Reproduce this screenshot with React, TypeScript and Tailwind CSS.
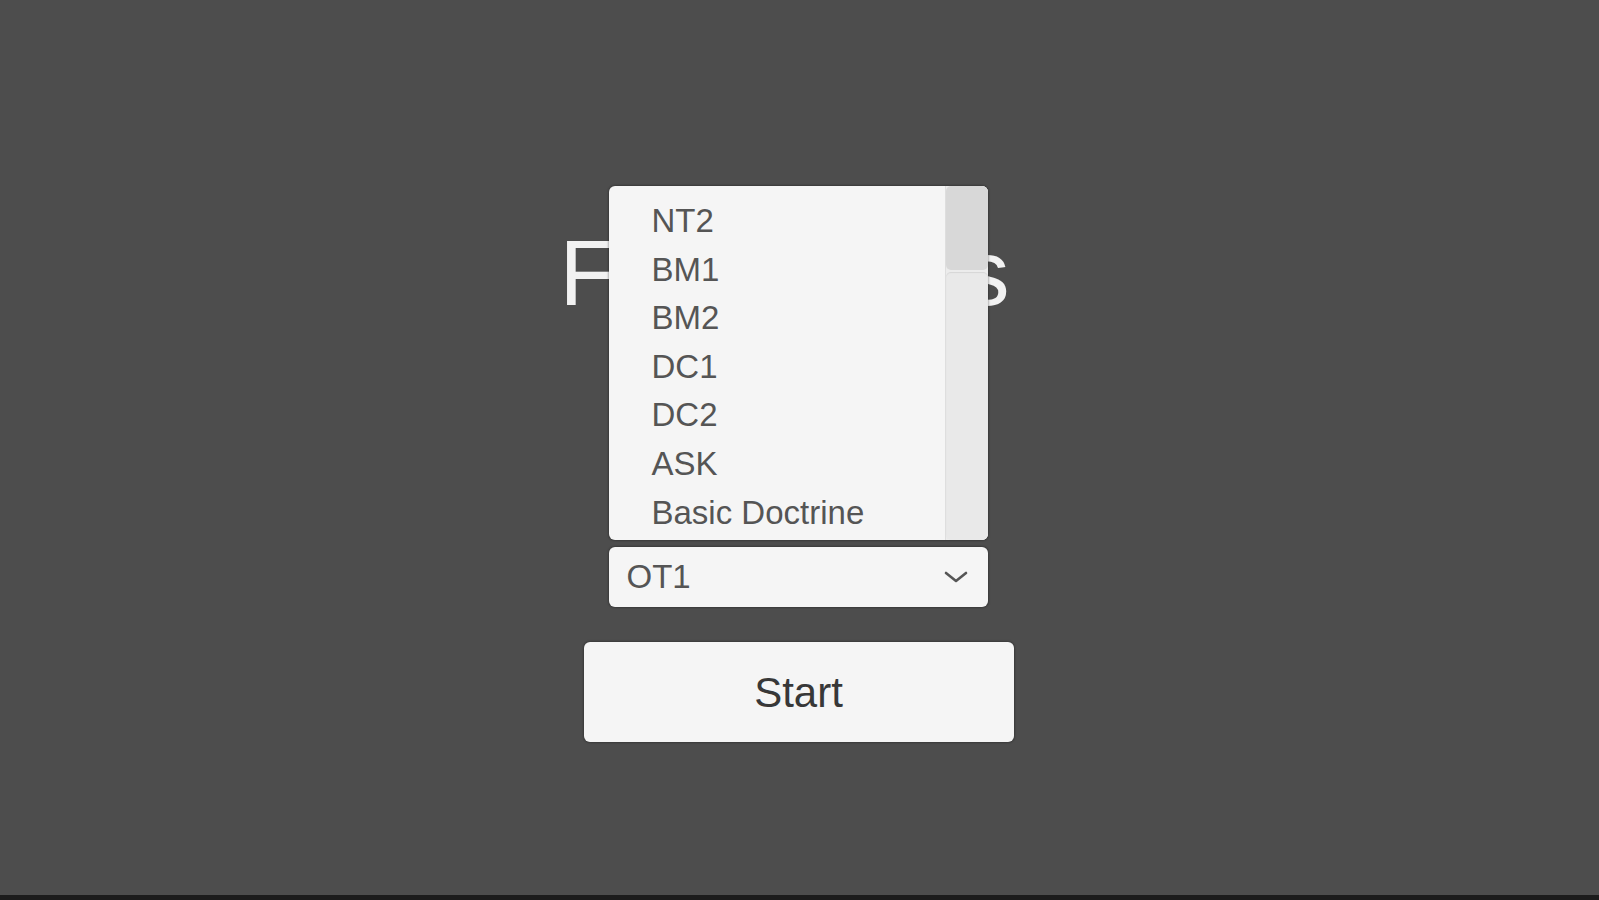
import React from 'react';

const options = ['NT2', 'BM1', 'BM2', 'DC1', 'DC2', 'ASK', 'Basic Doctrine'];

function Chevron({ className }: { className?: string }) {
  return (
    <svg viewBox="0 0 26 14" fill="none" stroke="currentColor" strokeWidth={2.6} strokeLinecap="round" strokeLinejoin="round" className={className}>
      <polyline points="3,3 13,11 23,3" />
    </svg>
  );
}

export default function App() {
  return (
    <div className="flex h-[900px] w-full flex-col bg-[#4d4d4d] font-['Liberation_Sans',Arial,sans-serif]">
      <main className="flex flex-1 flex-col items-center pt-[227px]">
        {/* Titel */}
        <h1 className="mr-[30px] text-[92px] leading-[92px] text-[#f2f2f2]">Flashcards</h1>

        {/* Dropdown */}
        <div className="relative mr-[3px] mt-[228px] w-[379px]">
          <div className="absolute bottom-[67px] left-0 flex h-[354px] w-[379px] overflow-hidden rounded-[6px] bg-[#f5f5f5] shadow-[0_0_2px_1px_rgba(0,0,0,0.25)]">
            <ul className="flex-1 pt-[11px]">
              {options.map((o) => (
                <li key={o} className="pl-[43px] text-[33px] leading-[48.6px] text-[#555]">
                  {o}
                </li>
              ))}
            </ul>
            <div className="flex w-[43px] flex-col gap-[2px] border-l border-[#dedede] bg-[#ececec]">
              <div className="h-[84px] rounded-[5px] bg-[#d8d8d8]" />
              <div className="flex-1 rounded-[5px] bg-[#e9e9e9] shadow-[inset_0_1px_1px_rgba(0,0,0,0.08)]" />
            </div>
          </div>

          <button
            type="button"
            className="flex h-[60px] w-[379px] items-center justify-between rounded-[6px] bg-[#f5f5f5] pl-[18px] pr-[19px] shadow-[0_0_2px_1px_rgba(0,0,0,0.25)]"
          >
            <span className="text-[33px] text-[#555]">OT1</span>
            <Chevron className="h-[14px] w-[26px] text-[#555]" />
          </button>
        </div>

        <button
          type="button"
          className="mr-[2px] mt-[35px] flex h-[100px] w-[430px] items-center justify-center rounded-[6px] bg-[#f5f5f5] text-[42px] text-[#383838] shadow-[0_0_2px_1px_rgba(0,0,0,0.25)]"
        >
          Start
        </button>
      </main>
      <div className="h-[5px] bg-[#1c1c1c]" />
    </div>
  );
}
